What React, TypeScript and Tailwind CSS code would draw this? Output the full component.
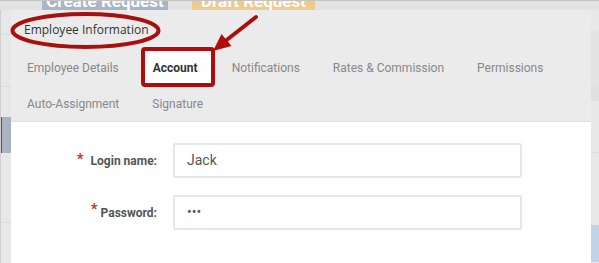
import React from 'react';

const tabsRow1 = ['Employee Details', 'Account', 'Notifications', 'Rates & Commission', 'Permissions'];
const tabsRow2 = ['Auto-Assignment', 'Signature'];

const Tab: React.FC<{ label: string; active?: boolean }> = ({ label, active }) => (
  <div
    className={
      active
        ? 'h-[35px] pl-[10px] pr-[14px] -mr-[4px] flex items-center bg-white text-[#333] font-bold'
        : 'h-[35px] px-[9px] flex items-center text-[#888]'
    }
  >
    {label}
  </div>
);

const Field: React.FC<{ label: string; value: string; spaced?: boolean }> = ({ label, value, spaced }) => (
  <div className="flex items-center">
    <div className="w-[146px] flex justify-end items-start text-[12px] font-bold text-[#555]">
      <span className={spaced ? 'text-[#c0392b] text-[15px] leading-[14px] mr-[7px] -mt-[2px]' : 'text-[#c0392b] text-[15px] leading-[14px] mr-[3px] -mt-[4px]'}>*</span>
      <span className="leading-[14px]">{label}</span>
    </div>
    <div className="ml-[16px] w-[349px] h-[35px] border-2 border-[#e4e7e9] rounded-[2px] bg-white flex items-center pl-[12px] text-[14px] text-[#555]">
      {value}
    </div>
  </div>
);

export default function App() {
  return (
    <div className="relative w-[599px] h-[263px] overflow-hidden bg-[#e6e6e6] font-['Roboto',sans-serif]">
      {/* page behind the modal */}
      <div className="h-[10px] flex border-t border-[#c4c4c4] bg-[#e2e2e2]">
        <div className="w-[42px]" />
        <div className="w-[126px] h-[10px] bg-[#a9b4c6] overflow-hidden flex justify-center">
          <span className="text-white font-bold text-[17px] leading-[17px] -mt-[8px]">Create Request</span>
        </div>
        <div className="w-[24px]" />
        <div className="w-[123px] h-[10px] bg-[#f0c98b] overflow-hidden flex justify-center">
          <span className="text-white font-bold text-[17px] leading-[17px] -mt-[8px]">Draft Request</span>
        </div>
      </div>
      <div className="flex h-[253px]">
        <div className="w-[11px] flex flex-col border-l border-[#cfcfcf] bg-[#e7e7e7]">
          <div className="h-[25px] border-b border-[#dcdcdc]" />
          <div className="h-[52px] border-b border-[#dcdcdc]" />
          <div className="h-[30px]" />
          <div className="h-[36px] bg-[#aab3c3] border-l border-[#3d5a80]" />
          <div className="h-[8px]" />
          <div className="h-[62px] border-b border-[#dcdcdc]" />
        </div>
        <div className="flex-1" />
        <div className="w-[8px] flex flex-col bg-[#e8e8e8]">
          <div className="h-[21px]" />
          <div className="h-[55px] bg-[#e3e3e3]" />
          <div className="h-[15px] bg-[#e0e0e0]" />
          <div className="h-[52px] border-b border-[#dedede]" />
          <div className="h-[72px]" />
          <div className="h-[37px] bg-[#c2d2e8]" />
        </div>
      </div>

      {/* modal */}
      <div className="absolute left-[11px] top-[10px] w-[580px] h-[253px] bg-[#ebebeb] flex flex-col">
        <div className="h-[39px] pl-[13px] pt-[11px] text-[12px] text-[#333] font-['Open_Sans',sans-serif]">
          Employee Information
        </div>
        <div className="pl-[7px] text-[12px]">
          <div className="flex gap-[15px] h-[36px] items-end">
            {tabsRow1.map((t) => (
              <Tab key={t} label={t} active={t === 'Account'} />
            ))}
          </div>
          <div className="flex gap-[15px] h-[36px] items-center pt-[2px]">
            {tabsRow2.map((t) => (
              <Tab key={t} label={t} />
            ))}
          </div>
        </div>
        <div className="flex-1 bg-white border-t border-[#e0e0e0] pt-[21px] flex flex-col gap-[17px]">
          <Field label="Login name:" value="Jack" spaced />
          <Field label="Password:" value="•••" />
        </div>
      </div>

      {/* red annotations */}
      <svg className="absolute left-0 top-0" width="599" height="263" viewBox="0 0 599 263">
        <ellipse cx="85.5" cy="30.5" rx="73" ry="16.5" fill="none" stroke="#a80f0f" strokeWidth="4" />
        <rect x="143" y="49" width="70" height="36" rx="2" fill="none" stroke="#b00c0c" strokeWidth="4" />
        <line x1="256" y1="17" x2="226" y2="40.5" stroke="#b00c0c" strokeWidth="4" strokeLinecap="round" />
        <polygon points="213,51 221.5,34 231.5,46" fill="#b00c0c" />
      </svg>
    </div>
  );
}
